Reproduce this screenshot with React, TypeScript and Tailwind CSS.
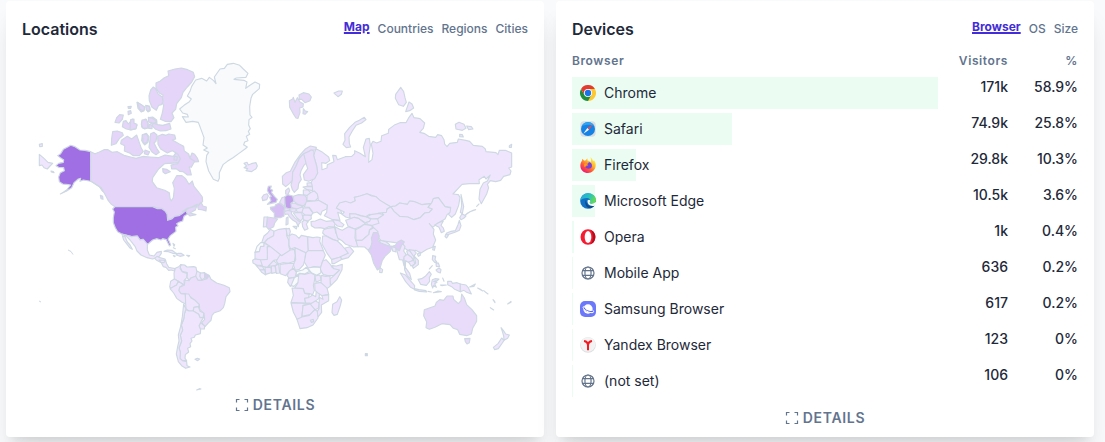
import React, { useState } from 'react';

type Shape = [fill: string, points: string];

const BASE = '#efe6fd';
const LIGHT = '#ecdffb';
const CANADA = '#e4d5f9';
const NONE = '#f8fafc';
const USA = '#9f6fe3';

const arctic: Shape[] = [
  [USA, '182,290 165,286 150,285 135,275 122,271 113,276 100,283 92,296 83,302 91,308 101,315 100,322 86,325 78,332 86,337 101,338 103,347 91,353 86,366 88,380 98,387 115,389 122,390 110,405 100,412 91,417 110,408 125,398 132,383 145,372 152,370 150,379 160,375 178,378 190,382 204,390 214,398 223,412 217,408 208,395 192,385 182,378'],
  [CANADA, '182,290 195,296 208,291 222,284 234,284 246,292 262,290 282,301 302,306 318,310 340,304 360,306 385,308 405,300 430,304 440,290 448,296 462,299 480,309 486,294 494,298 502,309 506,320 404,326 386,342 368,368 367,380 380,398 404,406 418,413 420,430 424,438 430,428 433,400 428,383 440,362 456,362 467,371 477,388 487,378 492,394 506,411 517,426 518,440 506,449 492,455 472,460 457,470 480,458 502,448 496,465 480,474 498,479 480,483 468,472 467,466 456,478 435,486 415,495 410,476 395,462 368,455 255,455 243,447 235,437 226,420 214,398 198,388 182,378'],
  [BASE, '28,298 42,310 54,322 68,325 60,333 52,342 42,338 36,330 28,332'],
  [CANADA, '248,230 262,228 277,233 280,241 268,251 258,266 244,271 245,250'],
  [CANADA, '274,256 292,244 305,252 320,240 327,260 334,280 340,290 328,302 310,302 300,295 283,288 284,272 272,266'],
  [CANADA, '255,202 260,188 269,179 280,180 277,193 267,204'],
  [CANADA, '280,199 288,197 295,207 307,192 311,204 321,211 317,222 303,225 289,222 277,215'],
  [CANADA, '321,142 331,148 344,156 342,167 334,171 324,160'],
  [CANADA, '350,152 358,153 361,166 354,171 349,165'],
  [CANADA, '335,202 346,192 354,205 355,218 344,222 335,216'],
  [CANADA, '337,239 349,235 357,245 354,262 344,270 335,257'],
  [CANADA, '362,236 372,232 381,240 378,259 372,264 380,280 388,292 378,299 366,291 357,277'],
  [CANADA, '357,188 368,186 380,195 381,207 369,209 360,203'],
  [CANADA, '358,208 367,211 366,221 356,220'],
  [CANADA, '294,169 302,167 304,175 295,179'],
  [CANADA, '294,155 304,154 302,160 295,160'],
  [BASE, '28,268 37,266 37,274 29,275'],
  [CANADA, '211,421 218,424 219,433 213,431'],
  [CANADA, '63,348 70,350 72,353 64,351'],
];

const greenland: Shape[] = [
  [NONE, '149,162 162,151 178,140 184,132 172,123 180,109 185,94 197,75 215,70 230,78 238,67 251,77 258,86 253,66 270,42 283,40 292,28 310,25 329,31 340,42 354,55 348,67 319,69 312,73 342,76 351,81 347,100 361,90 375,81 389,88 388,101 368,118 363,130 359,155 360,180 366,187 357,194 356,210 361,221 355,229 359,238 349,244 354,257 344,261 341,269 352,276 345,282 326,296 309,308 292,319 279,329 268,353 268,370 264,379 250,373 236,348 228,320 230,301 236,292 221,285 232,279 219,270 222,248 211,218 205,202 188,199 168,202 157,185 175,186 172,178 158,174'],
  [CANADA, '83,244 97,238 108,241 116,237 134,240 137,252 127,255 148,267 161,274 163,288 176,297 180,310 194,319 184,337 178,335 184,360 172,360 159,350 149,349 138,341 125,342 123,330 143,326 151,311 144,298 127,287 112,294 92,282 84,268'],
  [CANADA, '114,48 135,42 154,39 173,44 190,52 194,65 184,83 172,96 159,112 154,128 140,146 137,163 126,174 132,188 123,200 105,199 91,193 97,174 101,151 94,140 99,120 89,115 78,100 78,84 91,78 103,68 116,62'],
  [CANADA, '70,96 77,101 85,118 97,126 99,140 94,149 86,151 79,166 66,157 58,137 57,122 62,105'],
  [CANADA, '70,205 83,209 98,211 119,205 123,222 108,227 91,228 77,223 66,212'],
  [CANADA, '55,187 68,190 80,200 72,205 56,201'],
  [CANADA, '22,142 34,149 44,157 41,168 30,163'],
  [CANADA, '36,195 49,193 54,205 53,219 39,220 34,208'],
  [CANADA, '2,194 12,192 12,205 21,208 18,221 0,225'],
  [CANADA, '47,151 59,155 59,168 49,165'],
  [CANADA, '37,240 50,237 55,248 50,263 40,266'],
  [CANADA, '98,341 110,343 121,350 106,356 99,351'],
  [CANADA, '133,303 142,306 140,316 132,315'],
  [CANADA, '45,285 59,290 54,300 43,296'],
];

const americas: Shape[] = [
  [USA, '75,50 188,50 202,56 214,55 225,63 231,72 233,91 245,87 254,79 267,77 278,70 288,62 292,73 282,79 278,93 267,97 260,101 264,107 257,112 258,124 241,137 234,147 237,153 242,165 238,168 229,149 218,146 213,150 201,146 188,150 174,162 167,160 159,148 150,150 142,138 125,140 95,132 83,125 76,113 70,98 70,83 73,66 68,57'],
  [BASE, '96,132 125,140 142,138 150,150 160,148 172,162 172,180 178,195 192,198 201,187 214,184 214,190 208,199 198,203 188,207 171,203 153,195 141,183 135,169 120,150 110,140'],
  [BASE, '97,137 105,140 112,156 120,165 127,178 119,173 109,160 101,150'],
  [BASE, '194,205 201,199 209,203 225,207 230,221 236,232 246,234 256,236 253,243 244,240 236,241 228,232 220,230 214,218 200,211'],
  [BASE, '207,210 227,211 222,218 213,217'],
  [BASE, '222,184 232,180 246,181 256,188 263,192 248,190 235,185'],
  [BASE, '264,190 273,190 282,196 270,199 259,195'],
  [BASE, '250,197 256,198 253,200'],
  [BASE, '290,196 299,197 296,200'],
  [BASE, '249,160 254,164 252,169'],
  [BASE, '250,173 256,176'],
  [BASE, '272,224 284,225 291,231 311,230 318,232 320,243 324,248 317,259 302,264 298,272 291,262 292,248 276,244 271,232'],
  [BASE, '256,235 266,230 273,224 270,235 277,246 291,250 290,263 282,272 283,285 265,274 253,267 252,250'],
  [BASE, '321,243 332,249 330,258 336,270 324,271 317,259'],
  [BASE, '331,249 344,248 344,264 336,270 330,260'],
  ['#dccdf1', '344,249 357,256 351,266 344,264'],
  [BASE, '253,267 265,274 260,285 250,290 248,298 239,291 242,274'],
  [BASE, '250,290 260,285 265,274 280,284 269,292 267,302 275,311 286,312 287,342 275,336 260,325 251,309 240,296'],
  [LIGHT, '269,292 283,286 285,270 297,272 303,264 317,259 324,271 337,271 351,266 358,257 363,268 380,279 402,286 418,293 420,305 408,320 404,341 400,353 391,362 373,368 366,376 363,391 353,401 345,410 335,398 344,388 342,370 329,358 328,344 315,331 296,316 286,311 273,311 267,302'],
  [BASE, '286,312 296,312 303,324 315,331 328,344 325,350 312,352 309,363 297,363 288,357 287,342'],
  [BASE, '312,352 325,350 330,364 341,369 340,382 330,383 326,373 310,363'],
  [BASE, '331,398 344,408 343,417 331,417 327,411'],
  [BASE, '297,363 310,363 326,373 330,383 341,382 333,395 327,407 332,419 331,431 316,435 313,442 303,445 306,453 300,461 302,470 293,475 296,486 286,494 285,505 290,512 276,511 270,505 271,486 267,474 275,453 271,436 278,420 274,405 281,388 284,369 288,359'],
  [BASE, '281,342 288,357 284,369 281,388 274,405 278,420 271,436 275,453 267,474 271,486 270,505 277,512 290,515 291,527 300,531 287,535 275,527 265,515 259,492 263,470 267,453 265,435 272,409 277,380'],
  [BASE, '315,508 322,505 329,507 323,512'],
  [BASE, '320,600 328,596 333,597'],
  [CANADA, '323,50 333,37 339,48 349,51 348,63 335,59 325,58'],
];

const europe: Shape[] = [
  [BASE, '12,250 21,247 25,255 34,251 48,248 52,258 48,266 34,275 18,272 23,266 12,263 20,258'],
  [LIGHT, '127,289 139,278 151,274 164,248 181,224 195,208 211,198 229,202 227,210 214,210 205,215 191,221 178,235 168,259 158,277 157,301 149,310 137,320 128,312'],
  [LIGHT, '157,301 158,277 168,259 178,235 191,221 199,230 200,248 191,257 183,272 180,285 184,298 176,311 174,326 163,337 157,329 153,315'],
  [LIGHT, '191,221 205,215 214,210 222,213 221,227 230,258 233,279 224,296 206,304 193,300 190,284 203,266 199,253'],
  ['#c4a3ee', '85,319 94,318 91,327 98,331 94,337 104,350 112,358 108,367 94,370 82,373 93,362 89,352 94,349 87,341 82,331'],
  [LIGHT, '72,344 81,341 85,348 80,359 68,362 66,352'],
  ['#d6c0f4', '91,382 104,380 107,374 118,369 129,377 137,382 132,391 132,408 121,413 103,413 103,399 92,388'],
  ['#e4d4f8', '82,411 102,414 113,417 104,429 101,440 86,448 79,440'],
  [BASE, '72,411 82,411 79,440 70,441'],
  [LIGHT, '119,367 126,353 134,351 135,365 133,379'],
  ['#c3a0ec', '134,350 143,344 158,348 162,364 153,370 158,382 149,387 137,385 135,370'],
  [LIGHT, '137,331 146,324 149,332 144,343 137,342'],
  ['#e9dcfa', '160,349 176,344 193,345 199,352 200,368 190,378 174,373 162,364'],
  [LIGHT, '153,371 164,369 174,375 190,378 179,385 165,387 154,381'],
  [LIGHT, '134,382 149,387 152,393 142,396 134,392'],
  [LIGHT, '149,387 165,385 172,389 163,396 150,394'],
  [LIGHT, '133,395 144,391 155,394 154,401 164,413 176,423 182,426 176,433 175,440 169,427 158,420 148,410 144,402 135,403'],
  [BASE, '139,414 144,411 144,432 138,435'],
  [BASE, '159,439 171,439 169,447'],
  [BASE, '168,388 187,381 194,388 186,397 172,397'],
  [BASE, '190,384 207,383 214,393 219,398 214,406 195,405 186,397'],
  [BASE, '160,399 172,397 185,398 189,414 182,423 171,414'],
  [BASE, '189,405 213,406 214,416 204,423 190,420'],
  [BASE, '186,426 193,420 205,425 199,432 204,446 194,451 188,440'],
  [BASE, '201,309 214,308 217,319 202,319'],
  [BASE, '189,321 202,319 217,320 218,332 201,329'],
  [BASE, '190,330 204,330 212,337 202,347 190,344'],
  [BASE, '201,347 213,337 223,333 232,342 234,354 225,363 201,361'],
  [BASE, '199,365 225,363 235,361 246,367 262,376 260,387 246,394 242,405 231,396 220,399 208,382 193,381'],
  [BASE, '213,425 226,423 241,417 258,424 279,422 285,431 283,441 266,440 253,446 240,443 225,444 214,437'],
  [BASE, '278,419 296,422 312,434 307,441 292,438 284,430'],
  ['#e7daf9', '148,62 158,57 160,52 165,67 172,53 180,66 190,71 189,81 179,84 180,97 174,115 168,114 159,100 149,82'],
  ['#e7daf9', '177,45 190,38 207,42 214,51 210,62 195,68 185,58 178,58'],
  ['#e7daf9', '190,86 196,93 203,95 195,103 189,101'],
  [BASE, '282,39 296,33 307,33 304,43 294,50 287,44'],
  [BASE, '373,112 378,119 365,129 348,136 337,153 327,171 328,190 332,201 319,203 309,193 315,181 314,161 329,142 345,127 358,121'],
  [BASE, '289,384 299,369 316,364 332,369 346,362 343,352 360,348 381,341 395,348 408,350 420,361 438,372 452,380 441,386 439,397 417,399 409,407 389,403 377,410 363,407 347,402 329,401 330,415 317,411 306,403 313,396 302,391'],
  [BASE, '329,402 347,402 363,408 380,411 394,418 387,426 377,429 355,415 343,412 331,416'],
  [BASE, '317,421 331,416 343,412 355,415 376,431 360,440 344,447 324,438'],
  [BASE, '380,411 392,404 417,400 431,404 415,415 397,417'],
  [BASE, '378,427 389,424 392,417 413,417 417,430 397,436 385,435'],
];

const siberia: Shape[] = [
  [BASE, '-162,206 -145,215 -124,231 -121,242 -132,250 -145,248 -144,269 -129,264 -128,254 -108,245 -112,226 -102,227 -98,239 -74,230 -55,229 -46,221 -46,212 -30,220 -14,230 -20,202 -12,177 -2,175 1,196 -3,223 -4,247 6,239 9,220 4,192 9,184 20,189 33,184 35,167 55,160 56,148 75,134 90,128 108,128 117,112 126,100 132,113 150,116 164,129 160,145 149,157 162,160 176,169 197,172 203,164 215,167 222,179 224,192 231,200 239,190 262,187 265,177 287,181 299,184 310,196 337,199 346,207 348,215 378,218 384,224 388,211 406,211 425,219 425,261 416,264 423,273 420,284 401,289 392,301 377,305 361,302 352,313 356,323 350,342 334,371 327,357 330,328 340,309 352,303 361,285 348,297 343,289 327,299 328,311 298,311 276,313 249,342 265,344 270,352 266,376 256,402 245,412 236,404 242,382 225,380 205,353 190,356 185,370 156,374 134,365 119,363 112,373 89,369 77,378 62,380 30,363 18,350 -9,341 -30,348 -47,352 -44,362 -58,369 -91,369 -101,384 -88,391 -84,402 -97,397 -90,421 -112,419 -137,407 -130,397 -128,376 -144,367 -155,361 -158,344 -173,333 -176,306 -157,279 -160,258 -169,227'],
  [BASE, '62,380 77,378 89,369 112,373 119,363 134,365 156,374 183,371 174,382 187,387 178,397 164,399 151,413 132,419 113,411 89,409 72,394'],
  [BASE, '62,380 72,394 89,409 113,411 132,419 151,413 164,399 178,397 187,387 174,382 186,367 190,356 205,353 225,380 242,384 240,397 231,404 225,417 204,429 188,442 178,431 192,448 190,462 197,480 188,502 171,508 153,519 137,511 118,514 104,505 97,489 76,488 48,484 34,482 13,461 10,442 -2,431 17,419 31,410 41,395'],
  [BASE, '92,22 101,35 105,53 109,67 100,79 86,74 76,55 77,43'],
  [BASE, '117,66 126,72 131,84 119,92 107,95'],
  [BASE, '256,133 267,127 282,133 288,145 277,151 258,147'],
  [BASE, '290,138 304,140 309,147 296,149'],
  [BASE, '269,163 277,164 280,171 269,170'],
  [BASE, '418,197 425,193 424,202 418,202'],
  [BASE, '273,343 277,362 281,379 277,401 271,397 275,377'],
  [BASE, '276,401 288,408 281,415 273,419 269,413'],
  [BASE, '268,421 273,437 268,451 257,456 242,461 231,465 229,460 243,454 256,452 264,434'],
  [BASE, '227,463 235,466 230,474 225,470'],
  [BASE, '194,435 206,428 220,423 213,436 220,444 223,454 214,458 207,442'],
  [BASE, '286,405 293,399 299,396'],
  [BASE, '300,395 309,391 317,389'],
  [BASE, '320,379 327,372'],
];

const africa: Shape[] = [
  [BASE, '66,65 72,48 83,39 91,28 102,34 101,47 83,57 74,67 66,68'],
  [BASE, '74,67 83,57 101,47 102,34 117,28 140,25 140,47 147,62 147,82 151,92 125,107 120,103'],
  [BASE, '138,27 148,25 151,34 148,47 142,48'],
  [BASE, '147,48 156,42 168,46 177,55 184,46 202,50 205,95 198,98 165,83 152,87 147,76'],
  [BASE, '203,50 219,53 231,51 241,53 239,64 250,91 205,92'],
  [NONE, '45,97 51,79 62,68 73,68 72,80 62,80 58,94'],
  [BASE, '45,97 58,95 62,79 72,79 72,69 88,78 82,82 84,118 57,120 45,116'],
  [BASE, '82,118 82,79 91,80 121,104 125,117 101,121 92,131 82,143 67,139 57,120'],
  [BASE, '120,105 125,107 151,90 163,88 166,106 163,124 145,130 128,128 116,132 109,123'],
  [BASE, '165,83 197,98 195,119 190,135 178,148 166,151 160,133 167,119'],
  [BASE, '198,98 205,92 250,92 256,105 248,124 242,142 222,140 205,145 193,126'],
  [BASE, '248,123 258,119 271,133 276,142 300,149 280,167 264,167 250,164 240,148'],
  [BASE, '275,137 289,138 307,133 306,149 291,178 273,196 268,179 282,167 299,150 281,146'],
  [NONE, '168,155 188,150 199,142 209,154 194,162 179,160 168,168'],
  [NONE, '203,144 223,141 241,142 243,158 230,166 214,158'],
  [BASE, '171,168 180,161 194,163 212,158 225,166 223,184 220,196 223,211 218,224 208,221 194,219 190,206 164,204 173,190'],
  [BASE, '120,133 145,130 162,130 157,146 145,157 137,167 121,161'],
  [BASE, '38,121 44,117 61,119 67,137 50,135 39,129'],
  [BASE, '48,136 67,139 73,149 60,150'],
  [BASE, '60,150 74,149 77,165 65,157'],
  [BASE, '75,142 93,142 94,158 77,163'],
  [BASE, '94,137 105,137 108,157 95,160'],
  [BASE, '84,139 101,122 113,132 105,137'],
  [BASE, '106,137 116,132 119,159 109,160'],
  [BASE, '141,167 148,153 161,145 169,157 165,172 147,174'],
  [BASE, '145,176 162,172 163,187 151,199 143,187'],
  [NONE, '163,173 176,165 174,187 162,199 153,197'],
  [BASE, '156,204 189,206 194,220 208,223 205,234 194,235 197,250 153,247 160,226'],
  [BASE, '194,235 205,233 218,225 227,230 229,213 239,219 237,235 217,250 197,250'],
  [BASE, '153,249 210,250 203,253 189,256 188,268 185,297 171,298 160,276'],
  [BASE, '189,257 211,252 225,268 210,284 186,289'],
  [BASE, '211,252 226,243 238,249 235,265 225,269'],
  [BASE, '238,232 249,238 246,227 266,224 266,242 244,255 245,277 235,290 228,281 237,266'],
  [BASE, '171,298 186,291 208,286 225,269 232,274 234,294 219,315 201,323 180,326'],
  [BASE, '211,301 220,298 221,305 214,307'],
  [BASE, '224,190 243,187 260,200 266,223 246,227 233,218 225,211'],
  [BASE, '244,166 257,169 270,168 271,198 262,205 243,188'],
  [BASE, '225,168 240,165 243,180 228,187'],
  [BASE, '299,230 305,240 301,257 292,283 282,286 276,278 278,253 291,245'],
  ['#cbd5e1', '376,401 382,401 382,407 376,407'],
  [BASE, '250,30 263,25 284,22 287,38 300,58 291,62 279,58 254,45 248,39'],
  [BASE, '248,48 258,48 279,59 292,63 305,75 312,84 329,89 325,100 301,111 275,119 262,101 246,72'],
  [BASE, '275,119 301,111 306,118 282,131 276,131'],
  [BASE, '314,85 329,80 341,94 325,113 306,118 301,110 325,100'],
  [BASE, '285,20 299,28 307,31 325,20 346,28 345,55 355,80 341,81 317,73 307,63 293,54 289,40'],
  [BASE, '347,29 361,22 373,13 392,16 399,21 388,30 387,43 374,54 366,61 348,61'],
  [BASE, '348,61 366,61 374,54 387,43 389,30 401,23 414,35 401,46 404,58 393,79 385,91 374,81 353,80'],
];

const oceania: Shape[] = [
  ['#e0cef8', '-5,92 1,88 6,66 4,55 10,38 24,38 28,49 24,62 36,70 55,77 67,79 76,76 83,66 94,60 103,66 94,78 88,94 79,86 66,81 61,94 45,109 37,121 30,145 22,150 11,130 4,105'],
  [BASE, '28,60 49,66 59,74 56,78 31,68'],
  [BASE, '65,80 77,83 78,96 68,93'],
  [BASE, '30,143 38,149 36,158 29,157'],
  [BASE, '79,86 88,92 97,70 105,80 101,93 108,103 101,116 106,135 102,137 98,120 88,119'],
  [BASE, '102,110 112,103 124,111 130,120 117,128 107,122 106,142 119,160 124,179 112,168 104,150'],
  [BASE, '110,93 118,91 133,107 131,120 123,110 113,103'],
  [BASE, '116,126 132,121 134,133 123,138'],
  [BASE, '117,89 132,91 139,99 132,108 145,121 145,134 130,145 127,139 137,129 134,114'],
  [BASE, '91,159 105,164 121,182 134,197 133,208 122,202 107,185'],
  [BASE, '133,206 147,209 168,212 170,216 148,214 134,210'],
  [BASE, '144,178 155,176 166,169 178,155 184,163 178,173 179,184 169,196 152,193'],
  [BASE, '187,179 195,176 207,177 202,182 191,184 201,187 194,191 199,202 191,196 188,204 184,193'],
  [BASE, '188,107 197,109 195,119 201,127 194,127 187,119'],
  [BASE, '198,130 205,129 209,140 199,139'],
  [BASE, '198,150 207,144 213,149 211,159 202,155'],
  [BASE, '178,147 187,137'],
  [BASE, '174,214 184,216'],
  [BASE, '190,218 204,213 214,215'],
  [BASE, '218,174 222,184'],
  [BASE, '211,195 216,197 229,195'],
  [BASE, '233,184 244,184 247,190 261,188 271,192 271,215 254,208 245,200 233,194'],
  [BASE, '271,192 288,195 295,203 304,222 290,217 282,211 271,215'],
  [BASE, '299,201 312,199 316,192'],
  [BASE, '323,204 331,208 338,213'],
  [BASE, '341,212 347,217 354,222'],
  [BASE, '369,239 374,244 375,248'],
  [BASE, '361,263 371,270'],
  [BASE, '413,252 423,247 423,244'],
  ['#e9dcfa', '163,269 180,263 195,258 199,247 209,239 221,241 231,228 249,228 251,238 265,251 273,242 275,222 283,234 290,254 306,269 320,287 320,304 308,325 304,342 290,347 269,343 263,329 250,325 240,314 216,311 195,322 178,328 168,323 170,306 161,287'],
  ['#e9dcfa', '284,356 300,355 298,368 291,372 286,365'],
  [BASE, '393,323 400,331 407,342 418,345 413,355 402,361 401,348 397,334'],
  [BASE, '395,354 402,361 397,369 385,386 374,389 370,382 384,371'],
  [BASE, '188,89 190,80 196,79 193,91'],
  [BASE, '142,102 151,97 151,106 145,109'],
];

const regions = [
  { name: 'siberia', x: 370, y: 80, shapes: siberia },
  { name: 'arctic', x: 30, y: 55, shapes: arctic },
  { name: 'greenland', x: 130, y: 55, shapes: greenland },
  { name: 'americas', x: 90, y: 190, shapes: americas },
  { name: 'europe', x: 240, y: 80, shapes: europe },
  { name: 'africa', x: 240, y: 220, shapes: africa },
  { name: 'oceania', x: 370, y: 220, shapes: oceania },
];

function WorldMap() {
  return (
    <svg viewBox="22 41 506 354" className="block w-full" role="img" aria-label="Visitors by country">
      {regions.map((r) => (
        <g key={r.name} transform={`translate(${r.x} ${r.y}) scale(0.33333)`} stroke="#cdd8e3" strokeWidth="3.4" strokeLinejoin="round">
          {r.shapes.map(([fill, points], i) => (
            <polygon key={i} points={points} fill={fill} />
          ))}
        </g>
      ))}
      <path d="M68 250l3 1.5 2 3M39 301l2 1" stroke="#cdd8e3" fill="none" />
    </svg>
  );
}

function ChromeIcon() {
  return (
    <svg viewBox="0 0 48 48" className="size-4">
      <path fill="#fcc934" d="M24 24V12h20.8A24 24 0 0 1 24 48Z" />
      <path fill="#1e8e3e" d="M3.2 12A24 24 0 0 0 24 48l10.4-18L24 24 13.6 30Z" />
      <path fill="#e33b2e" d="M3.2 12 13.6 30 24 12h20.8A24 24 0 0 0 3.2 12Z" />
      <circle cx="24" cy="24" r="12" fill="#fff" />
      <circle cx="24" cy="24" r="9.5" fill="#1a73e8" />
    </svg>
  );
}

function SafariIcon() {
  return (
    <svg viewBox="0 0 48 48" className="size-4">
      <rect x="1" y="1" width="46" height="46" rx="11" fill="#dcdde0" />
      <circle cx="24" cy="24" r="21" fill="#1583e6" />
      <path fill="#2fa5f2" d="M5 16a21 21 0 0 1 38 0c-12-6-26-6-38 0Z" />
      <path fill="#f04a43" d="M39 10 22 21l5 5Z" />
      <path fill="#fff" d="M10 38 22 21l5 5Z" />
    </svg>
  );
}

function FirefoxIcon() {
  return (
    <svg viewBox="0 0 48 48" className="size-4">
      <defs>
        <linearGradient id="fx" x1="0.85" y1="0.1" x2="0.2" y2="0.95">
          <stop offset="0" stopColor="#fff24a" />
          <stop offset="0.35" stopColor="#ffb52b" />
          <stop offset="0.65" stopColor="#ff5a36" />
          <stop offset="1" stopColor="#ee1577" />
        </linearGradient>
      </defs>
      <path fill="url(#fx)" d="M31 0c5 4 7 8 8 12 2 1 3-1 2-4 5 6 7 12 6 20-2 12-11 20-23 20S1 39 1 26c0-6 2-11 5-15l1-6 6 6 4-1 5-6 1 7c5 0 8 2 9 5 2-6 1-11-1-16Z" />
      <path fill="#7442d7" d="M24 15c7 0 12 4 12 11 0 6-4 9-10 9-7 0-11-4-11-8 5 2 8 1 10-2-5 0-8-2-9-5l8-1 4-4Z" />
      <path fill="#ff9a24" d="M14 20c3-2 9-1 11 0-1 3-5 3-6 5-2 2-1 5-4 5-4-2-4-7-1-10Z" />
    </svg>
  );
}

function EdgeIcon() {
  return (
    <svg viewBox="0 0 48 48" className="size-4">
      <defs>
        <linearGradient id="edgeTop" x1="0" y1="0.2" x2="1" y2="0.6">
          <stop offset="0" stopColor="#25a9dd" />
          <stop offset="0.5" stopColor="#26c1c0" />
          <stop offset="1" stopColor="#68df48" />
        </linearGradient>
      </defs>
      <circle cx="24" cy="24" r="23.5" fill="#1171c4" />
      <path fill="url(#edgeTop)" d="M1 23C2 10 12 .5 24 .5 38 .5 48 10 48 20c0 8-6 12-12 12-5 0-7-2-7-4s2-2 2-5c0-4-4-8-10-8C12 15 4 18 1 23Z" />
      <path fill="#114a8b" d="M18 21c-5 8-1 21 9 24 7 2 13-2 17-8-14 6-26-1-26-16Z" />
      <path fill="#f3fff9" d="M23 22c4-4 9-1 8 3-1 3-2 3-2 4 1 3 7 4 12 2l7-4v8l-4 3c-11 4-24-3-21-16Z" />
    </svg>
  );
}

function OperaIcon() {
  return (
    <svg viewBox="0 0 48 48" className="size-4">
      <ellipse cx="24" cy="24" rx="22.5" ry="23.5" fill="#f51c32" />
      <path fill="#b50d20" d="M31 2a23 23.5 0 0 1 0 44c10-9 10-35 0-44Z" />
      <ellipse cx="24" cy="24" rx="10" ry="18" fill="#fff" />
    </svg>
  );
}

function GlobeIcon() {
  return (
    <svg viewBox="0 0 24 24" className="size-4" fill="none" stroke="#64748b" strokeWidth="1.8">
      <circle cx="12" cy="12" r="9" />
      <ellipse cx="12" cy="12" rx="4.6" ry="9" />
      <path d="M4 8.500h16M4 15.500h16" />
    </svg>
  );
}

function SamsungIcon() {
  return (
    <svg viewBox="0 0 48 48" className="size-4">
      <rect width="48" height="48" rx="15" fill="#6b78fa" />
      <circle cx="24" cy="24" r="14" fill="#fff" />
      <path fill="none" stroke="#5262e8" strokeWidth="4" d="M11 20c5 9 16 13 26 11" />
      <path fill="none" stroke="#fff" strokeWidth="3" d="M11 16c-7 3 7 18 25 19 6 0 6-3 3-7" />
    </svg>
  );
}

function YandexIcon() {
  return (
    <svg viewBox="0 0 48 48" className="size-4">
      <circle cx="24" cy="24" r="23.5" fill="#dcdde0" />
      <circle cx="24" cy="22.5" r="22" fill="#f3f3f4" />
      <path fill="none" stroke="#f01c22" strokeWidth="6" d="M12 12c7 1 12 6 12 14v14M36 12c-7 1-12 6-12 14" />
    </svg>
  );
}

const browsers = [
  { name: 'Chrome', Icon: ChromeIcon, visitors: '171k', percent: '58.9%', bar: 100 },
  { name: 'Safari', Icon: SafariIcon, visitors: '74.9k', percent: '25.8%', bar: 43.8 },
  { name: 'Firefox', Icon: FirefoxIcon, visitors: '29.8k', percent: '10.3%', bar: 17.4 },
  { name: 'Microsoft Edge', Icon: EdgeIcon, visitors: '10.5k', percent: '3.6%', bar: 6.3 },
  { name: 'Opera', Icon: OperaIcon, visitors: '1k', percent: '0.4%', bar: 0.58 },
  { name: 'Mobile App', Icon: GlobeIcon, visitors: '636', percent: '0.2%', bar: 0.37 },
  { name: 'Samsung Browser', Icon: SamsungIcon, visitors: '617', percent: '0.2%', bar: 0.36 },
  { name: 'Yandex Browser', Icon: YandexIcon, visitors: '123', percent: '0%', bar: 0.2 },
  { name: '(not set)', Icon: GlobeIcon, visitors: '106', percent: '0%', bar: 0.2 },
];

function Tabs({ items }: { items: string[] }) {
  const [active, setActive] = useState(items[0]);
  return (
    <div className="flex gap-2 text-xs font-medium text-slate-500">
      {items.map((item) => (
        <button
          key={item}
          type="button"
          onClick={() => setActive(item)}
          className={
            item === active
              ? 'pb-1 leading-4 font-bold text-indigo-700 underline decoration-2'
              : 'pb-px leading-4'
          }
        >
          {item}
        </button>
      ))}
    </div>
  );
}

function CardHeader({ title, tabs }: { title: string; tabs: string[] }) {
  return (
    <div className="flex items-center justify-between">
      <h3 className="text-base leading-6 font-semibold text-gray-800">{title}</h3>
      <Tabs items={tabs} />
    </div>
  );
}

function DetailsLink() {
  return (
    <div className="flex justify-center">
      <a href="#details" className="flex items-center gap-1 text-sm leading-5 font-semibold tracking-wider text-slate-500">
        <svg viewBox="0 0 14 14" className="size-3.5" fill="none" stroke="currentColor" strokeWidth="1.2">
          <path d="M1.500 4.500v-3h3M9.500 1.500h3v3M12.500 9.500v3h-3M4.500 12.500h-3v-3" />
        </svg>
        DETAILS
      </a>
    </div>
  );
}

const cardClass = 'min-w-0 rounded bg-white px-4 pt-4 pb-[9px] shadow-xl';

export default function App() {
  return (
    <main className="min-h-screen bg-gray-50 pt-px pr-[11px] pl-1.5 font-['Inter',sans-serif]">
      <div className="grid grid-cols-2 gap-3">
        <section className={cardClass}>
          <CardHeader title="Locations" tabs={['Map', 'Countries', 'Regions', 'Cities']} />
          <WorldMap />
          <DetailsLink />
        </section>
        <section className={cardClass}>
          <CardHeader title="Devices" tabs={['Browser', 'OS', 'Size']} />
          <table className="mt-3 mb-[7px] w-full table-fixed border-collapse text-sm text-gray-800">
            <thead>
              <tr className="text-xs leading-4 tracking-wider text-slate-500">
                <th scope="col" className="pb-2 text-left font-semibold">Browser</th>
                <th scope="col" className="w-[70px] pb-2 text-right font-semibold">Visitors</th>
                <th scope="col" className="w-[70px] pb-2 text-right font-semibold">%</th>
              </tr>
            </thead>
            <tbody>
              {browsers.map(({ name, Icon, visitors, percent, bar }) => (
                <tr key={name} className="align-top leading-5">
                  <td className="pb-1">
                    <div className="grid h-8 items-center">
                      <div className="col-start-1 row-start-1 h-8 bg-[#ebfdf3]" style={{ width: `${bar}%` }} />
                      <div className="col-start-1 row-start-1 flex items-center gap-2 px-2">
                        <Icon />
                        <span>{name}</span>
                      </div>
                    </div>
                  </td>
                  <td className="text-right font-medium">{visitors}</td>
                  <td className="text-right font-medium">{percent}</td>
                </tr>
              ))}
            </tbody>
          </table>
          <DetailsLink />
        </section>
      </div>
    </main>
  );
}
